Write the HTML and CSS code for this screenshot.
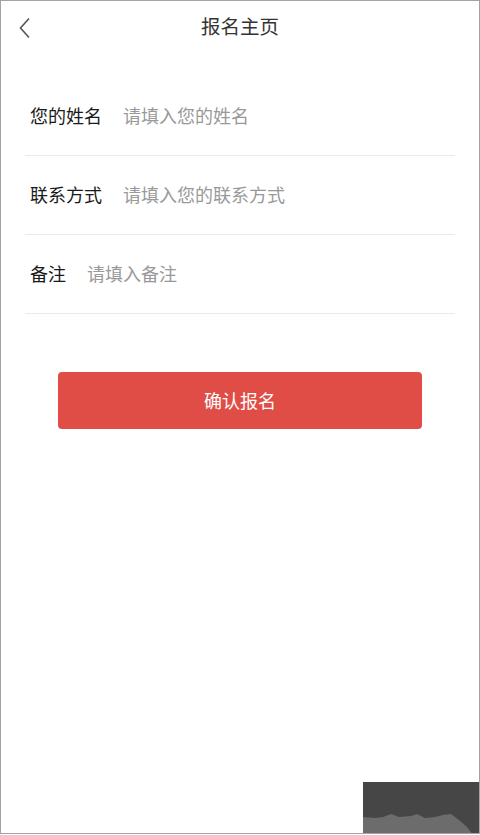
FILE: index.html
```html
<!DOCTYPE html>
<html lang="zh">
<head>
<meta charset="utf-8">
<title>报名主页</title>
<link rel="stylesheet" href="styles.css">
</head>
<body>
<div class="page">
  <header class="topbar">
    <a class="back" href="#" aria-label="返回">
      <svg width="14" height="22" viewBox="0 0 14 22"><path d="M11 1.5 L2.5 11 L11 20.5" fill="none" stroke="#555" stroke-width="1.6"/></svg>
    </a>
    <h1 class="title">报名主页</h1>
  </header>
  <form class="form">
    <label class="row"><span class="label">您的姓名</span><input class="field" type="text" placeholder="请填入您的姓名"></label>
    <label class="row"><span class="label">联系方式</span><input class="field" type="text" placeholder="请填入您的联系方式"></label>
    <label class="row"><span class="label">备注</span><input class="field" type="text" placeholder="请填入备注"></label>
    <div class="actions"><button class="submit" type="button">确认报名</button></div>
  </form>
  <div class="corner-mark">
    <svg width="116" height="53" viewBox="0 0 116 53"><rect width="116" height="53" fill="#464646"/><path d="M0 35 L12 36 L20 35 L28 32 L36 35 L48 34 L54 32 L62 36 L72 35 L80 33 L88 32 L96 38 L104 45 L110 53 L0 53 Z" fill="#6c6c6c"/></svg>
  </div>
</div>
</body>
</html>
```

FILE: styles.css
```css
html, body {
  margin: 0;
  padding: 0;
  background: #fff;
}
body {
  font-family: "Noto Sans CJK SC", "Noto Sans", sans-serif;
}
.page {
  position: relative;
  width: 480px;
  height: 834px;
  box-sizing: border-box;
  border: 1px solid #a3a3a3;
  background: #fff;
  overflow: hidden;
}
.topbar {
  position: relative;
  height: 54px;
  display: flex;
  align-items: center;
  justify-content: center;
}
.back {
  position: absolute;
  left: 17px;
  top: 16px;
  display: block;
  line-height: 0;
}
.title {
  margin: 0;
  margin-top: -4px;
  font-size: 19.5px;
  font-weight: 400;
  color: #333;
  line-height: 1;
}
.form {
  margin: 0;
  padding-top: 22px;
}
.row {
  display: flex;
  align-items: center;
  height: 76px;
  padding-bottom: 2px;
  margin: 0 24px;
  padding-left: 5px;
  border-bottom: 1px solid #e9e9e9;
}
.label {
  font-size: 18px;
  color: #1a1a1a;
  white-space: nowrap;
  margin-right: 20px;
}
.field {
  flex: 1;
  min-width: 0;
  border: none;
  outline: none;
  padding: 0 0 0 1px;
  background: transparent;
  font-family: inherit;
  font-size: 18px;
  color: #333;
}
.field::placeholder {
  color: #999;
}
.actions {
  display: flex;
  justify-content: center;
  padding-top: 58px;
}
.submit {
  width: 364px;
  height: 57px;
  padding: 0 0 2px;
  border: none;
  border-radius: 4px;
  background: #e04d46;
  color: #fff;
  font-family: inherit;
  font-size: 18px;
}
.corner-mark {
  position: absolute;
  left: 362px;
  top: 781px;
  line-height: 0;
}
```
